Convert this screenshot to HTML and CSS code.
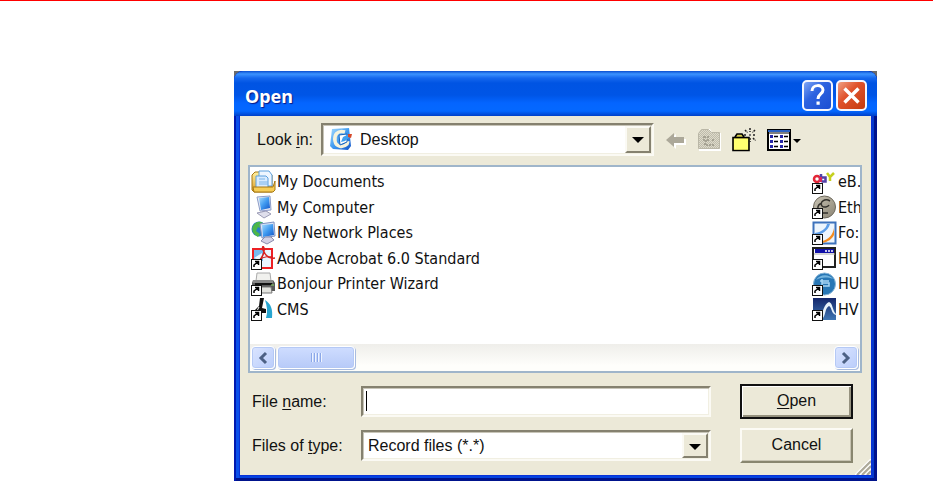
FILE: index.html
```html
<!DOCTYPE html>
<html lang="en">
<head>
<meta charset="utf-8">
<title>Open</title>
<link rel="stylesheet" href="styles.css">
</head>
<body>
<svg class="defs" width="0" height="0" aria-hidden="true">
  <defs>
    <linearGradient id="blue" x1="0" y1="0" x2="1" y2="1"><stop offset="0" stop-color="#a5dcff"/><stop offset=".5" stop-color="#3f9af0"/><stop offset="1" stop-color="#1455c8"/></linearGradient>
    <linearGradient id="sand" x1="0" y1="0" x2="0" y2="1"><stop offset="0" stop-color="#fff0a0"/><stop offset="1" stop-color="#d99a24"/></linearGradient>
    <linearGradient id="stone" x1="0" y1="0" x2="1" y2="1"><stop offset="0" stop-color="#c9c4b4"/><stop offset="1" stop-color="#8b8474"/></linearGradient>
    <linearGradient id="navy" x1="0" y1="0" x2="0" y2="1"><stop offset="0" stop-color="#14266a"/><stop offset="1" stop-color="#3f76b4"/></linearGradient>
    <pattern id="dither" width="2" height="2" patternUnits="userSpaceOnUse"><rect width="2" height="2" fill="#dedbcb"/><path d="M0 0h1v1H0zM1 1h1v1H1z" fill="#bebbab"/></pattern>
    <g id="shortcut"><rect x="0.500" y="13.500" width="10" height="10" fill="#fff" stroke="#111"/><path d="M3 21v-2l4-3M4 15.500h3.500V19" fill="none" stroke="#000" stroke-width="1.500"/></g>
  </defs>
</svg>
<main class="page">
  <div class="frame">
    <section class="dialog" aria-label="Open">
      <header class="titlebar">
        <h1 class="title">Open</h1>
        <button class="cap help" aria-label="Help"><svg width="31" height="31" viewBox="0 0 31 31"><path d="M10 11c0-7 11-7 11-1 0 4-5 4-5 9" fill="none" stroke="#fff" stroke-width="3"/><path d="M14.500 21.500h3.200v3.200h-3.200z" fill="#fff"/></svg></button>
        <button class="cap close" aria-label="Close"><svg width="31" height="31" viewBox="0 0 31 31"><path d="M8.500 8.500l14 14M22.500 8.500l-14 14" stroke="#fff" stroke-width="3.400"/></svg></button>
      </header>
      <div class="client">
        <div class="lookin">
          <label class="lookin-label" for="folder">Look <u>i</u>n:</label>
          <div class="combo">
            <svg class="combo-icon" width="24" height="24" viewBox="0 0 24 24"><path d="M3 2l17-1 2 18-3 4-15-1-3-3z" fill="url(#blue)"/><path d="M16 5C8 3 5 8 6 14c1 6 8 7 12 3l1-3" fill="none" stroke="#f6f3dc" stroke-width="3.500"/><path d="M10 8l8-1v8l-7 3z" fill="#fff" stroke="#1764bd"/><path d="M12 15l2-5 6-3 1 3-5 4z" fill="#3fa0ef"/><path d="M19 7l4 0-1 4-3-1z" fill="#d64a2b"/></svg>
            <select class="sunken select has-icon" id="folder"><option>Desktop</option></select>
            <span class="drop"></span>
          </div>
          <div class="tools">
            <button class="tool back" aria-label="Back" disabled><svg width="22" height="20" viewBox="0 0 22 20"><path d="M2 11l8-7v5h10v6H10v4z" fill="#fff"/><path d="M0 10l8-7v4h10v6H8v4z" fill="#aca899"/></svg></button>
            <button class="tool up" aria-label="Up one level" disabled><svg width="25" height="24" viewBox="0 0 25 24"><path d="M2 23h22V5h-9l-2-4H6L2 6z" fill="#fff"/><path d="M1.500 20.500V5.500l3-4h7l3 3h8v16z" fill="url(#dither)" stroke="#bab7a7"/><path d="M7 9h4v4H7zM8 15v2h9M15 12h2" fill="none" stroke="#a5a293" stroke-width="2" stroke-dasharray="2 1"/></svg></button>
            <button class="tool new" aria-label="Create new folder"><svg width="26" height="26" viewBox="0 0 26 26"><path d="M2 23.500h16V10.500H2zM4 10l2-3h5l2 3" fill="#d9cf4c" stroke="#000" stroke-width="1.600"/><path d="M3 12h14v10.500H3z" fill="#ffff70"/><path d="M19 1v4M19 11v4M13 8h3M22 8h3M14 3l2.500 2.500M24 3l-2.500 2.500M22 11l2.500 2.500" stroke="#222" stroke-width="1.500" stroke-dasharray="2 1"/><path d="M18 7h2v2h-2z" fill="#777"/></svg></button>
            <button class="tool views" aria-label="View menu"><svg width="36" height="24" viewBox="0 0 36 24"><path d="M2 2h22v20H2z" fill="#fff" stroke="#000" stroke-width="2"/><path d="M2 2h22v2H2z" fill="#2a62c4"/><path d="M2 5h22" stroke="#000"/><path d="M4 7h3v3H4zM4 12h3v3H4zM4 17h3v3H4zM14 7h3v3h-3zM14 12h3v3h-3zM14 17h3v3h-3z" fill="#2727a8"/><path d="M8 8.500h4M8 13.500h4M8 18.500h4M18 8.500h4M18 13.500h4M18 18.500h4" stroke="#000" stroke-width="1.500"/><path d="M27 11h8l-4 4z" fill="#000"/></svg></button>
          </div>
        </div>
        <div class="listbox">
          <div class="columns">
            <ul class="files">
              <li class="file"><svg width="26" height="24" viewBox="0 0 26 24"><path d="M1 5l3-3h5l2 3h10v17H3l-2-2z" fill="url(#sand)" stroke="#a87913"/><path d="M8 1h10l3 4v11H8z" fill="#eef6ff" stroke="#5da0dd"/><path d="M5 6h10l2 2v10H5z" fill="#d7ebff" stroke="#5da0dd"/><path d="M8 9h6M8 12h9M8 14h9" stroke="#7db4e8"/><path d="M2 17h20l2-6v9l-2 2H3z" fill="#f6cd57" stroke="#a87913"/></svg><span>My Documents</span></li>
              <li class="file"><svg width="26" height="24" viewBox="0 0 26 24"><path d="M6 2l13-1 1 14-11 1z" fill="#e4e8f5" stroke="#8b9cc8"/><path d="M8 3l10-1 1 11-9 2z" fill="url(#blue)"/><path d="M11 16l5-1 1 4-5 2z" fill="#9ca4cd"/><path d="M6 18l9-2 5 3-7 4z" fill="#dfdfec" stroke="#9c9cb6"/></svg><span>My Computer</span></li>
              <li class="file"><svg width="26" height="24" viewBox="0 0 26 24"><circle cx="8" cy="8" r="7.500" fill="#2a7ec4"/><path d="M2 5c4-6 8-4 10-3L9 7 7 6l-2 4 4 3-2 3C2 13 0 9 2 5z" fill="#4cb648"/><path d="M9 3l14-2 1 14-13 2z" fill="#dce4f5" stroke="#7e91c1"/><path d="M11 4l11-1 1 11-11 2z" fill="url(#blue)"/><path d="M14 16h6l3 3-7 4-6-3z" fill="#d3d2e6" stroke="#8b8cab"/></svg><span>My Network Places</span></li>
              <li class="file"><svg width="26" height="24" viewBox="0 0 26 24"><path d="M2 3h19v19H2z" fill="#eaf5ff" stroke="#ed2024" stroke-width="2"/><path d="M3 4h9v11H3z" fill="#76baf0"/><path d="M3 12l8-5v8z" fill="#e9f6ff"/><path d="M8 15c3-3 6-9 5-13-1-3-2-1-1 2 2 5 5 9 12 8" fill="none" stroke="#d82020" stroke-width="1.500"/><path d="M9 13c4-2 8-3 13-2" fill="none" stroke="#d82020"/><use href="#shortcut"/></svg><span>Adobe Acrobat 6.0 Standard</span></li>
              <li class="file"><svg width="26" height="24" viewBox="0 0 26 24"><path d="M6 1h13l1 8H5z" fill="#f1f1ee" stroke="#aaa"/><path d="M2 8h20l2 3v8H1v-8z" fill="#595959"/><path d="M2 8h20v3H2z" fill="#888"/><path d="M4 12h17" stroke="#111" stroke-width="2"/><path d="M7 15h13l1 6H9z" fill="#e4e4df" stroke="#777"/><path d="M20 13h3" stroke="#8bd267"/><use href="#shortcut"/></svg><span>Bonjour Printer Wizard</span></li>
              <li class="file"><svg width="26" height="24" viewBox="0 0 26 24"><path d="M14 3c6 4 8 9 7 18h-6c2-6 1-12-1-18z" fill="#28a5d0"/><path d="M9 1h4l-2 10 4 1v4h-4l-2 5-4-3-1-5 4-4z" fill="#111"/><path d="M8 10l-2 4" stroke="#fff"/><use href="#shortcut"/></svg><span>CMS</span></li>
            </ul>
            <ul class="files">
              <li class="file"><svg width="26" height="24" viewBox="0 0 26 24"><circle cx="5" cy="9" r="3" fill="none" stroke="#e32636" stroke-width="2.500"/><path d="M9 4v8M9.500 7.500h4v4h-4" fill="none" stroke="#5240a8" stroke-width="2.500"/><path d="M15 3l3 4 4-4M18 7v4" fill="none" stroke="#c5d01e" stroke-width="2.500"/><path d="M7 7h3v5H7z" fill="#d5265b"/><use href="#shortcut"/></svg><span>eB.</span></li>
              <li class="file"><svg width="26" height="24" viewBox="0 0 26 24"><circle cx="12.500" cy="12" r="11" fill="url(#stone)" stroke="#6e695d"/><path d="M18 6c-5-3-11 1-8 5 2 2 6 1 7-1M10 8c-6 2-5 9 0 10h6" fill="none" stroke="#33312c" stroke-width="1.500"/><use href="#shortcut"/></svg><span>Eth</span></li>
              <li class="file"><svg width="26" height="24" viewBox="0 0 26 24"><path d="M1.500 1.500h22v21h-22z" fill="#edf5fd" stroke="#3d72bc" stroke-width="2"/><path d="M3 12C9 11 14 8 15 3h3C16 10 9 14 3 15z" fill="#5d9ee9"/><path d="M10 20c6-1 11-6 12-13v7c-2 4-6 7-12 8z" fill="#f58c1f"/><use href="#shortcut"/></svg><span>Fo:</span></li>
              <li class="file"><svg width="26" height="24" viewBox="0 0 26 24"><path d="M1 2h22v19H1z" fill="#fff" stroke="#222" stroke-width="2"/><path d="M3 3h19v4H3z" fill="#1010a8"/><path d="M13 5h2M16 5h2M19 5h2" stroke="#fff" stroke-width="1.500"/><path d="M2 8h21" stroke="#aaa"/><use href="#shortcut"/></svg><span>HU</span></li>
              <li class="file"><svg width="26" height="24" viewBox="0 0 26 24"><circle cx="12.500" cy="12" r="11" fill="#2877b5" stroke="#86b5d8"/><path d="M4 8c4-6 13-6 17-1-6-2-11-2-17 1z" fill="#74b5df"/><path d="M8 9h9M10 7v7h7v-3h-7" fill="none" stroke="#a9d8f5" stroke-width="1.500"/><use href="#shortcut"/></svg><span>HU</span></li>
              <li class="file"><svg width="26" height="24" viewBox="0 0 26 24"><path d="M1 1h23v22H1z" fill="url(#navy)"/><path d="M9 19c2-4 3-12 8-14 4 1 3 8 7 12v1c-5-1-4-8-7-9-4 2-3 8-6 12z" fill="#e8f3fb"/><use href="#shortcut"/></svg><span>HV</span></li>
            </ul>
          </div>
          <div class="scrollbar">
            <button class="arrow" aria-label="Scroll left"><svg width="10" height="14" viewBox="0 0 10 14"><path d="M8 2L3 7l5 5" fill="none" stroke="#4d6185" stroke-width="3"/></svg></button>
            <div class="thumb"><i></i><i></i><i></i><i></i></div>
            <button class="arrow last" aria-label="Scroll right"><svg width="10" height="14" viewBox="0 0 10 14"><path d="M2 2l5 5-5 5" fill="none" stroke="#4d6185" stroke-width="3"/></svg></button>
          </div>
        </div>
        <form class="form">
          <label for="name">File <u>n</u>ame:</label>
          <div class="combo"><input class="sunken" id="name" type="text"><span class="caret"></span></div>
          <button class="push default" type="button"><span><u>O</u>pen</span></button>
          <label for="type">Files of <u>t</u>ype:</label>
          <div class="combo">
            <select class="sunken select" id="type"><option>Record files (*.*)</option></select>
            <span class="drop"></span>
          </div>
          <button class="push" type="button">Cancel</button>
        </form>
        <svg class="grip" width="16" height="16" viewBox="0 0 16 16" aria-hidden="true"><path d="M0 16L16 0M5 16L16 5M10 16l6-6" stroke="#fff" stroke-width="1.500"/><path d="M2 16L16 2M7 16l9-9M12 16l4-4" stroke="#aca899" stroke-width="2"/></svg>
      </div>
    </section>
  </div>
</main>
</body>
</html>
```
FILE: styles.css
```css
* { box-sizing: border-box; }

body {
  margin: 0;
  background: #fff;
  color: #111;
  font-family: "Liberation Sans", Arial, sans-serif;
  font-size: 16px;
}

button, input, select { font: inherit; color: inherit; }
u { text-underline-offset: 2px; }
.defs { position: absolute; }

.page {
  border-top: 1px solid #f00;
  padding: 70px 56px 0 234px;
}

.frame { background: #6b6b6b; }

.dialog {
  min-width: 520px;
  padding: 0 6px 6px;
  border-radius: 9px 9px 0 0;
  background: #0831d9;
  box-shadow: inset 2px 0 #0019b0, inset -3px 0 #00138c, inset 0 -3px #00138c, inset 5px 0 #0a50ea, inset -5px 0 #0639cc, inset 0 -5px #0543e0;
}

.titlebar {
  display: flex;
  align-items: center;
  gap: 3px;
  height: 45px;
  margin: 0 -6px;
  padding: 4px 10px 0 11px;
  border-radius: 9px 9px 0 0;
  background: linear-gradient(#0a4ed0 0, #3b93ff 3px, #1668ee 7px, #0054e3 12px, #0055e6 24px, #0465ff 32px, #0468ff 40px, #0040c8 45px);
}

.title {
  flex: 1;
  margin: 0;
  color: #fff;
  font: bold 18px "Noto Sans", sans-serif;
  text-shadow: 1px 1px 1px #0a1883;
}

.cap {
  width: 31px;
  height: 31px;
  padding: 0;
  overflow: hidden;
  border: 2px solid #f4f7ff;
  border-radius: 5px;
}
.cap svg { display: block; margin: -2px; }
.help { background: linear-gradient(135deg, #7da5f5, #2d63e0 40%, #1b4fd2); }
.close { background: linear-gradient(135deg, #f0a084, #e0532d 40%, #c43a10); }

.client {
  position: relative;
  background: #ece9d8;
}

.lookin {
  display: flex;
  align-items: center;
  padding: 7px 69px 9px 17px;
}
.lookin-label { width: 64px; }
.lookin .combo { flex: 1; }

.combo { position: relative; }

.sunken {
  display: block;
  width: 100%;
  height: 31px;
  margin: 0;
  padding: 0 5px;
  outline: 0;
  border: 2px solid;
  border-color: #85816f #fbfaf4 #fbfaf4 #85816f;
  border-radius: 0;
  background: #fff;
  box-shadow: inset 1px 1px #c8c5b8, inset -1px -1px #f1efe2;
}
.select { appearance: none; }
.has-icon { height: 33px; padding-left: 37px; }

.combo-icon { position: absolute; left: 8px; top: 4px; }

.drop {
  position: absolute;
  top: 3px;
  right: 3px;
  bottom: 3px;
  width: 26px;
  border: 2px solid;
  border-color: #fbfaf4 #85816f #85816f #fbfaf4;
  background: #ece9d8;
  pointer-events: none;
}
.drop::after {
  content: "";
  position: absolute;
  left: 5px;
  top: 9px;
  border: 6px solid transparent;
  border-top-color: #000;
  border-bottom: 0;
}

.caret {
  position: absolute;
  left: 5px;
  top: 5px;
  width: 1px;
  height: 20px;
  background: #000;
}

.tools {
  display: flex;
  align-items: center;
  gap: 9px;
  padding-left: 12px;
}
.tool { padding: 0; border: 0; background: none; }
.tool svg { display: block; }

.listbox {
  margin: 0 9px 0 8px;
  border: 2px solid #9fb5ca;
  background: #fff;
  font-family: "DejaVu Sans Condensed", "DejaVu Sans", sans-serif;
}

.columns {
  display: grid;
  grid-template-columns: 1fr 48px;
  height: 177px;
  padding: 2px 0 22px 1px;
}

.files {
  display: grid;
  grid-template-rows: repeat(6, 1fr);
  margin: 0;
  padding: 0;
  overflow: hidden;
  list-style: none;
  white-space: nowrap;
}
.file { display: flex; align-items: center; min-height: 0; }
.file svg { flex: none; }

.scrollbar {
  display: flex;
  gap: 2px;
  height: 27px;
  padding: 2px 2px 2px 1px;
  background: linear-gradient(#efeeea, #fefefb 80%);
}
.arrow, .thumb {
  display: flex;
  align-items: center;
  justify-content: center;
  padding: 0;
  border: 1px solid #fff;
  border-radius: 4px;
  background: linear-gradient(135deg, #dbe5ff, #bacdfb);
  box-shadow: inset 0 0 0 1px #b5c9f5, 1px 1px #a9bce0;
}
.arrow { width: 24px; }
.last { margin-left: auto; }
.thumb { width: 78px; gap: 2px; background: linear-gradient(#cfddff, #b7caf8); }
.thumb i { width: 1px; height: 9px; background: #8ca8e8; box-shadow: 1px 0 #edf3ff; }

.form {
  display: grid;
  grid-template-columns: 109px 1fr 113px;
  grid-auto-rows: 35px;
  align-items: center;
  row-gap: 9px;
  padding: 11px 18px 12px 12px;
}

.push {
  height: 35px;
  padding: 0 0 2px;
  border: 2px solid;
  border-color: #fcfbf5 #89866f #89866f #fcfbf5;
  background: #ece9d8;
  box-shadow: inset -1px -1px #c8c4b2;
}
.default {
  border: 2px solid #111;
  box-shadow: inset 1px 1px #fff, inset -2px -2px #96927f;
}
.form .combo { margin-right: 29px; }

.grip { position: absolute; right: 0; bottom: 0; }
```
